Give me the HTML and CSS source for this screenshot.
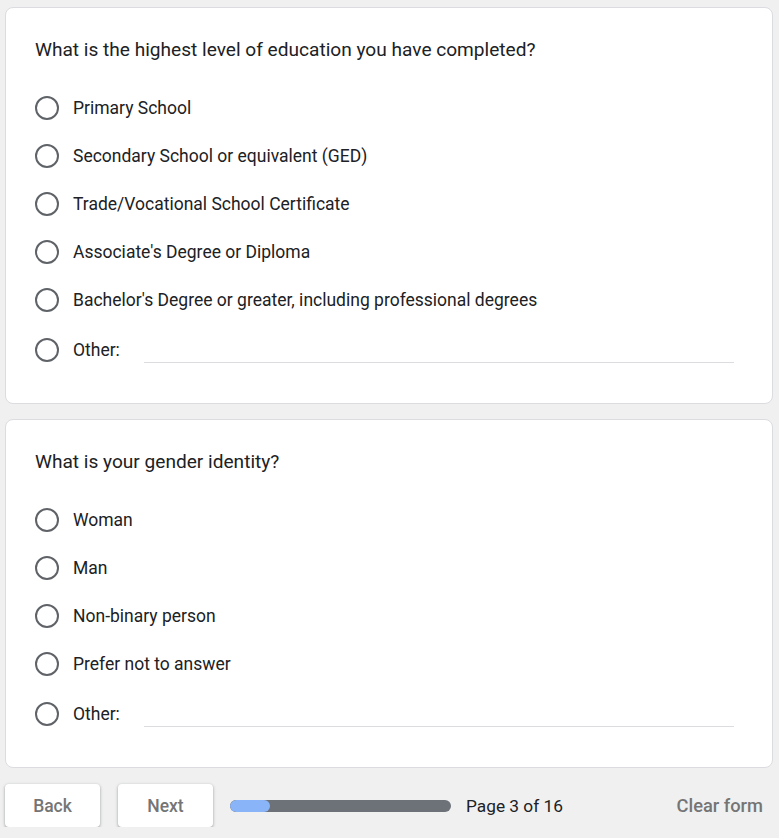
FILE: index.html
```html
<!DOCTYPE html>
<html>
<head>
<meta charset="utf-8">
<link rel="stylesheet" href="styles.css">
</head>
<body>
<div class="page">
  <section class="card">
    <div class="question">What is the highest level of education you have completed?</div>
    <div class="options">
      <div class="option"><span class="radio"></span><span class="label">Primary School</span></div>
      <div class="option"><span class="radio"></span><span class="label">Secondary School or equivalent (GED)</span></div>
      <div class="option"><span class="radio"></span><span class="label">Trade/Vocational School Certificate</span></div>
      <div class="option"><span class="radio"></span><span class="label">Associate's Degree or Diploma</span></div>
      <div class="option"><span class="radio"></span><span class="label">Bachelor's Degree or greater, including professional degrees</span></div>
      <div class="option other"><span class="radio"></span><span class="label">Other:</span><span class="field"></span></div>
    </div>
  </section>
  <section class="card">
    <div class="question">What is your gender identity?</div>
    <div class="options">
      <div class="option"><span class="radio"></span><span class="label">Woman</span></div>
      <div class="option"><span class="radio"></span><span class="label">Man</span></div>
      <div class="option"><span class="radio"></span><span class="label">Non-binary person</span></div>
      <div class="option"><span class="radio"></span><span class="label">Prefer not to answer</span></div>
      <div class="option other"><span class="radio"></span><span class="label">Other:</span><span class="field"></span></div>
    </div>
  </section>
  <div class="footer">
    <button class="btn">Back</button>
    <button class="btn btn-next">Next</button>
    <div class="progress"><div class="progress-fill" style="width:40px"></div></div>
    <span class="page-count">Page 3 of 16</span>
    <span class="clear">Clear form</span>
  </div>
</div>
</body>
</html>
```

FILE: styles.css
```css
html, body {
  margin: 0;
  padding: 0;
  background: #f0f0f0;
}
body {
  font-family: Roboto, "Liberation Sans", sans-serif;
  color: #202124;
}
.page {
  padding: 7px 6px 0 5px;
  display: flex;
  flex-direction: column;
  gap: 15px;
}
.card {
  background: #fff;
  border: 1px solid #dadce0;
  border-radius: 8px;
  padding: 30px 38px 29px 29px;
}
.question {
  font-size: 19.1px;
  line-height: 24px;
}
.options {
  margin-top: 22px;
  display: flex;
  flex-direction: column;
}
.option {
  height: 48px;
  display: flex;
  align-items: center;
}
.option.other {
  margin-top: 2px;
}
.radio {
  width: 24px;
  height: 24px;
  box-sizing: border-box;
  border: 2px solid #5f6368;
  border-radius: 50%;
  flex: none;
}
.label {
  margin-left: 14px;
  font-size: 17.5px;
}
.field {
  flex: 1;
  align-self: flex-end;
  margin: 0 0 11px 24px;
  border-bottom: 1px solid #dadce0;
  height: 1px;
}
.footer {
  display: flex;
  align-items: center;
  margin-top: 1px;
  padding-right: 10px;
}
.btn {
  width: 95px;
  height: 43px;
  background: #fff;
  border: none;
  border-radius: 4px;
  box-shadow: 0 1px 2px rgba(60,64,67,0.3), 0 1px 3px 1px rgba(60,64,67,0.15);
  font-family: Roboto, "Liberation Sans", sans-serif;
  font-weight: 500;
  font-size: 17.5px;
  color: #757575;
  padding: 0;
}
.btn-next {
  margin-left: 18px;
}
.progress {
  margin-left: 17px;
  width: 221px;
  height: 12px;
  border-radius: 6px;
  background: #6d7178;
  overflow: hidden;
}
.progress-fill {
  height: 100%;
  background: #8ab4f8;
  border-radius: 6px;
}
.page-count {
  margin-left: 15px;
  font-size: 17.3px;
}
.clear {
  margin-left: auto;
  font-size: 18.3px;
  font-weight: 500;
  color: #757575;
}
```
